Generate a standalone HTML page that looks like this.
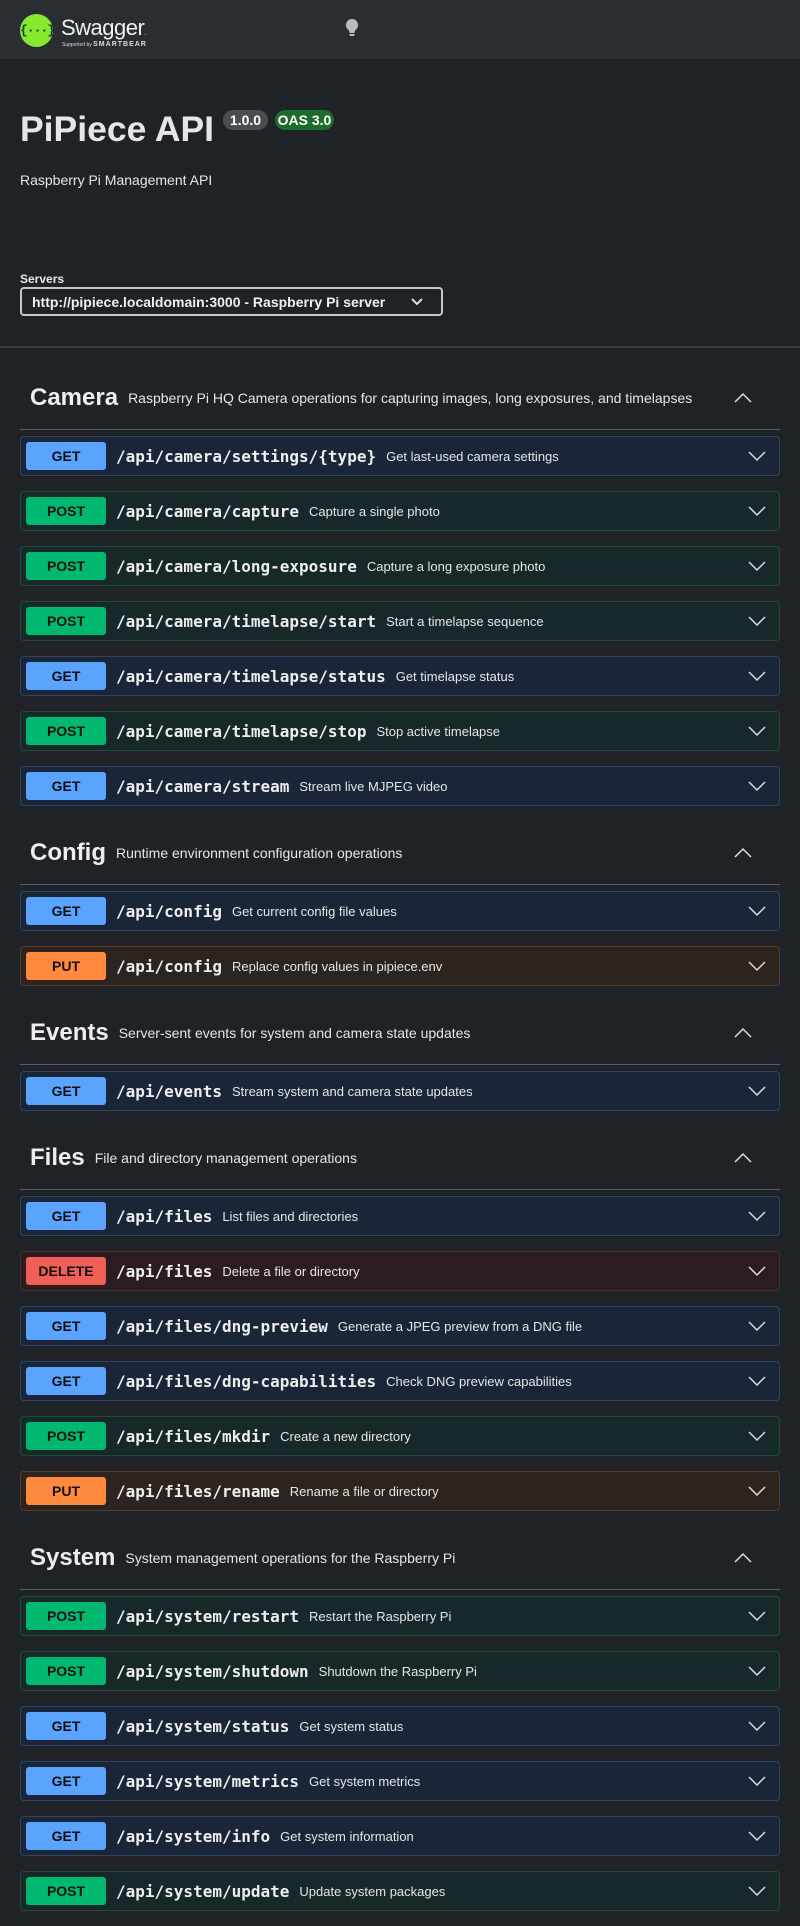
<!DOCTYPE html>
<html><head><meta charset="utf-8"><style>
*{box-sizing:border-box;margin:0;padding:0}
body{width:800px;height:1926px;background:#1f2226;font-family:"Liberation Sans",sans-serif;color:#e8e8e8;overflow:hidden;position:relative}
.top{height:59px;background:#2a2d31;position:relative}
.logo{position:absolute;left:20px;top:14px;width:33px;height:33px;border-radius:50%;background:#85ea2d;color:#173647;font:bold 13px "Liberation Mono",monospace;text-align:center;line-height:33px;letter-spacing:-1px}
.sw{position:absolute;left:61px;top:15px;font-size:22px;color:#f0f0f0;letter-spacing:-0.5px}
.sb{position:absolute;left:62px;top:41px;font-size:5px;color:#ddd}
.sb b{font-size:7px;letter-spacing:1px}
.bulb{position:absolute;left:345px;top:18px}
.title{position:absolute;left:20px;top:109px;font-size:35.5px;font-weight:bold;color:#e6e6e6}
.badge{position:absolute;top:110px;height:20px;border-radius:10px;font-size:14px;font-weight:bold;line-height:20px;text-align:center;color:#fff}
.desc{position:absolute;left:20px;top:172px;font-size:14px;color:#e6e6e6}
.srvl{position:absolute;left:20px;top:272px;font-size:12px;font-weight:bold}
.sel{position:absolute;left:20px;top:287px;width:423px;height:29px;border:2px solid #c8c8c8;border-radius:4px;font-size:14px;font-weight:bold;padding:5px 0 0 10px;color:#f0f0f0}
.sel svg{position:absolute;right:17px;top:8px}
.hr{position:absolute;left:0;top:346px;width:800px;height:2px;background:#3d4045}
.wrap{position:absolute;left:20px;top:366px;width:760px}
.tag{height:64px;border-bottom:1px solid #5a5d62;position:relative;display:flex;align-items:center;padding-left:10px}
.tag h3{font-size:24px;font-weight:bold;color:#eee;margin-right:10px}
.tag span{font-size:14px;color:#e6e6e6}
.tag svg{position:absolute;right:27px;top:26px}
.ops{padding-top:6px;margin-bottom:15px}
.op{height:40px;margin-bottom:15px;border:1px solid;border-radius:4px;position:relative;display:flex;align-items:center;padding-left:5px}
.op:last-child{margin-bottom:0}
.m{width:80px;height:28px;border-radius:3px;font-size:14px;font-weight:bold;color:#111;text-align:center;line-height:28px;margin-right:10px}
.p{font:bold 16px "DejaVu Sans Mono","Liberation Mono",monospace;color:#eee;margin-right:10px}
.d{font-size:13px;color:#e6e6e6}
.op svg{position:absolute;right:12px;top:13px}
.get{background:#1a2638;border-color:#2c4466}.get .m{background:#5aa4ff}
.post{background:#16282a;border-color:#1e4a38}.post .m{background:#00b870}
.put{background:#2b241f;border-color:#5a3a22}.put .m{background:#ff8a3d}
.del{background:#2a1c20;border-color:#4e2a2c}.del .m{background:#ef5f55}
</style></head><body>
<div class="top">
<div class="logo">{···}</div>
<div class="sw">Swagger<span style="font-size:6px">.</span></div>
<div class="sb">Supported by <b>SMARTBEAR</b></div>
<svg class="bulb" width="14" height="22" viewBox="0 0 14 22"><path d="M7 1a6 6 0 0 0-4 10.5c1 1 1.5 2 1.5 3.5h5c0-1.5.5-2.5 1.5-3.5A6 6 0 0 0 7 1z" fill="#b9bcbf"/><rect x="4.5" y="16" width="5" height="2" fill="#b9bcbf"/></svg>
</div>
<div class="title">PiPiece API</div>
<div class="badge" style="left:223px;width:45px;background:#4a4d52">1.0.0</div>
<div class="badge" style="left:275px;width:59px;background:#1e6b2e">OAS 3.0</div>
<div class="desc">Raspberry Pi Management API</div>
<div class="srvl">Servers</div>
<div class="sel">http://pipiece.localdomain:3000 - Raspberry Pi server<svg width="14" height="10" viewBox="0 0 14 10"><path d="M2 2l5 5 5-5" stroke="#ddd" stroke-width="2" fill="none"/></svg></div>
<div class="hr"></div>
<div class="wrap">
<div class="tag"><h3>Camera</h3><span>Raspberry Pi HQ Camera operations for capturing images, long exposures, and timelapses</span><svg width="20" height="12" viewBox="0 0 20 12"><path d="M2 10l8-8 8 8" stroke="#ddd" stroke-width="1.5" fill="none"/></svg></div>
<div class="ops">
<div class="op get"><div class="m">GET</div><div class="p">/api/camera/settings/{type}</div><div class="d">Get last-used camera settings</div><svg width="20" height="12"><path d="M2 2l8 8 8-8" stroke="#ddd" stroke-width="1.5" fill="none"/></svg></div>
<div class="op post"><div class="m">POST</div><div class="p">/api/camera/capture</div><div class="d">Capture a single photo</div><svg width="20" height="12"><path d="M2 2l8 8 8-8" stroke="#ddd" stroke-width="1.5" fill="none"/></svg></div>
<div class="op post"><div class="m">POST</div><div class="p">/api/camera/long-exposure</div><div class="d">Capture a long exposure photo</div><svg width="20" height="12"><path d="M2 2l8 8 8-8" stroke="#ddd" stroke-width="1.5" fill="none"/></svg></div>
<div class="op post"><div class="m">POST</div><div class="p">/api/camera/timelapse/start</div><div class="d">Start a timelapse sequence</div><svg width="20" height="12"><path d="M2 2l8 8 8-8" stroke="#ddd" stroke-width="1.5" fill="none"/></svg></div>
<div class="op get"><div class="m">GET</div><div class="p">/api/camera/timelapse/status</div><div class="d">Get timelapse status</div><svg width="20" height="12"><path d="M2 2l8 8 8-8" stroke="#ddd" stroke-width="1.5" fill="none"/></svg></div>
<div class="op post"><div class="m">POST</div><div class="p">/api/camera/timelapse/stop</div><div class="d">Stop active timelapse</div><svg width="20" height="12"><path d="M2 2l8 8 8-8" stroke="#ddd" stroke-width="1.5" fill="none"/></svg></div>
<div class="op get"><div class="m">GET</div><div class="p">/api/camera/stream</div><div class="d">Stream live MJPEG video</div><svg width="20" height="12"><path d="M2 2l8 8 8-8" stroke="#ddd" stroke-width="1.5" fill="none"/></svg></div>
</div>
<div class="tag"><h3>Config</h3><span>Runtime environment configuration operations</span><svg width="20" height="12"><path d="M2 10l8-8 8 8" stroke="#ddd" stroke-width="1.5" fill="none"/></svg></div>
<div class="ops">
<div class="op get"><div class="m">GET</div><div class="p">/api/config</div><div class="d">Get current config file values</div><svg width="20" height="12"><path d="M2 2l8 8 8-8" stroke="#ddd" stroke-width="1.5" fill="none"/></svg></div>
<div class="op put"><div class="m">PUT</div><div class="p">/api/config</div><div class="d">Replace config values in pipiece.env</div><svg width="20" height="12"><path d="M2 2l8 8 8-8" stroke="#ddd" stroke-width="1.5" fill="none"/></svg></div>
</div>
<div class="tag"><h3>Events</h3><span>Server-sent events for system and camera state updates</span><svg width="20" height="12"><path d="M2 10l8-8 8 8" stroke="#ddd" stroke-width="1.5" fill="none"/></svg></div>
<div class="ops">
<div class="op get"><div class="m">GET</div><div class="p">/api/events</div><div class="d">Stream system and camera state updates</div><svg width="20" height="12"><path d="M2 2l8 8 8-8" stroke="#ddd" stroke-width="1.5" fill="none"/></svg></div>
</div>
<div class="tag"><h3>Files</h3><span>File and directory management operations</span><svg width="20" height="12"><path d="M2 10l8-8 8 8" stroke="#ddd" stroke-width="1.5" fill="none"/></svg></div>
<div class="ops">
<div class="op get"><div class="m">GET</div><div class="p">/api/files</div><div class="d">List files and directories</div><svg width="20" height="12"><path d="M2 2l8 8 8-8" stroke="#ddd" stroke-width="1.5" fill="none"/></svg></div>
<div class="op del"><div class="m">DELETE</div><div class="p">/api/files</div><div class="d">Delete a file or directory</div><svg width="20" height="12"><path d="M2 2l8 8 8-8" stroke="#ddd" stroke-width="1.5" fill="none"/></svg></div>
<div class="op get"><div class="m">GET</div><div class="p">/api/files/dng-preview</div><div class="d">Generate a JPEG preview from a DNG file</div><svg width="20" height="12"><path d="M2 2l8 8 8-8" stroke="#ddd" stroke-width="1.5" fill="none"/></svg></div>
<div class="op get"><div class="m">GET</div><div class="p">/api/files/dng-capabilities</div><div class="d">Check DNG preview capabilities</div><svg width="20" height="12"><path d="M2 2l8 8 8-8" stroke="#ddd" stroke-width="1.5" fill="none"/></svg></div>
<div class="op post"><div class="m">POST</div><div class="p">/api/files/mkdir</div><div class="d">Create a new directory</div><svg width="20" height="12"><path d="M2 2l8 8 8-8" stroke="#ddd" stroke-width="1.5" fill="none"/></svg></div>
<div class="op put"><div class="m">PUT</div><div class="p">/api/files/rename</div><div class="d">Rename a file or directory</div><svg width="20" height="12"><path d="M2 2l8 8 8-8" stroke="#ddd" stroke-width="1.5" fill="none"/></svg></div>
</div>
<div class="tag"><h3>System</h3><span>System management operations for the Raspberry Pi</span><svg width="20" height="12"><path d="M2 10l8-8 8 8" stroke="#ddd" stroke-width="1.5" fill="none"/></svg></div>
<div class="ops">
<div class="op post"><div class="m">POST</div><div class="p">/api/system/restart</div><div class="d">Restart the Raspberry Pi</div><svg width="20" height="12"><path d="M2 2l8 8 8-8" stroke="#ddd" stroke-width="1.5" fill="none"/></svg></div>
<div class="op post"><div class="m">POST</div><div class="p">/api/system/shutdown</div><div class="d">Shutdown the Raspberry Pi</div><svg width="20" height="12"><path d="M2 2l8 8 8-8" stroke="#ddd" stroke-width="1.5" fill="none"/></svg></div>
<div class="op get"><div class="m">GET</div><div class="p">/api/system/status</div><div class="d">Get system status</div><svg width="20" height="12"><path d="M2 2l8 8 8-8" stroke="#ddd" stroke-width="1.5" fill="none"/></svg></div>
<div class="op get"><div class="m">GET</div><div class="p">/api/system/metrics</div><div class="d">Get system metrics</div><svg width="20" height="12"><path d="M2 2l8 8 8-8" stroke="#ddd" stroke-width="1.5" fill="none"/></svg></div>
<div class="op get"><div class="m">GET</div><div class="p">/api/system/info</div><div class="d">Get system information</div><svg width="20" height="12"><path d="M2 2l8 8 8-8" stroke="#ddd" stroke-width="1.5" fill="none"/></svg></div>
<div class="op post"><div class="m">POST</div><div class="p">/api/system/update</div><div class="d">Update system packages</div><svg width="20" height="12"><path d="M2 2l8 8 8-8" stroke="#ddd" stroke-width="1.5" fill="none"/></svg></div>
</div>
</div>
</body></html>
